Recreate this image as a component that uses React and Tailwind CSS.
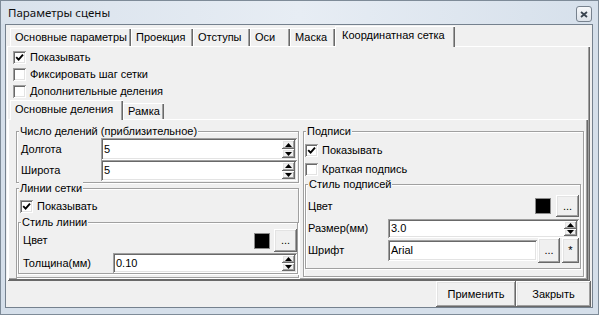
import React from 'react'

const raised =
  'bg-[#f0f0f0] shadow-[inset_-1px_-1px_0_#696969,inset_1px_1px_0_#ffffff,inset_-2px_-2px_0_#a0a0a0,inset_2px_2px_0_#e3e3e3]'
const sunken =
  'bg-white shadow-[inset_1px_1px_0_#a0a0a0,inset_-1px_-1px_0_#ffffff,inset_2px_2px_0_#696969,inset_-2px_-2px_0_#e3e3e3]'
const tabEdge = 'shadow-[inset_1px_1px_0_#ffffff,inset_-1px_0_0_#696969,inset_-2px_0_0_#a0a0a0]'
const panelEdge =
  'shadow-[inset_1px_1px_0_#ffffff,inset_-1px_-1px_0_#696969,inset_-2px_-2px_0_#a0a0a0]'

function Check({ checked }) {
  return (
    <span className={`w-[13px] h-[13px] shrink-0 flex items-center justify-center ${sunken}`}>
      {checked && (
        <svg width="9" height="9" viewBox="0 0 9 9">
          <path d="M1.2 4.2 L3.6 6.6 L8 1.6" fill="none" stroke="#000" strokeWidth="1.9" />
        </svg>
      )}
    </span>
  )
}

function CheckRow({ checked, label, className = '' }) {
  return (
    <div className={`flex items-center gap-[4px] ${className}`}>
      <Check checked={checked} />
      <span>{label}</span>
    </div>
  )
}

function Arrow({ up }) {
  return (
    <svg width="7" height="4" viewBox="0 0 7 4">
      <path d={up ? 'M3.5 0 L7 4 L0 4 Z' : 'M0 0 L7 0 L3.5 4 Z'} fill="#000" />
    </svg>
  )
}

function Spin() {
  return (
    <div className="flex flex-col w-[13px] shrink-0">
      <div className={`flex-1 flex items-center justify-center ${raised}`}>
        <Arrow up />
      </div>
      <div className={`flex-1 flex items-center justify-center ${raised}`}>
        <Arrow />
      </div>
    </div>
  )
}

function Field({ value, spin, className = '' }) {
  return (
    <div className={`flex items-stretch p-[2px] ${sunken} ${className}`}>
      <span className="flex-1 pl-[1px] flex items-center">{value}</span>
      {spin && <Spin />}
    </div>
  )
}

function Btn({ children, className = '' }) {
  return (
    <div className={`flex items-center justify-center ${raised} ${className}`}>{children}</div>
  )
}

function Swatch() {
  return <span className="w-[16px] h-[16px] bg-black border border-[#8a8a8a] shrink-0" />
}

function Group({ title, className = '', children }) {
  return (
    <div
      className={`flex flex-col border border-[#a0a0a0] shadow-[inset_1px_1px_0_#ffffff,1px_1px_0_#ffffff] ${className}`}
    >
      <span className="self-start -mt-[8px] ml-[2px] px-[1px] bg-[#f0f0f0] leading-[14px]">
        {title}
      </span>
      {children}
    </div>
  )
}

const tabs = [
  { label: 'Основные параметры', w: 'w-[121px]' },
  { label: 'Проекция', w: 'w-[62px]' },
  { label: 'Отступы', w: 'w-[57px]' },
  { label: 'Оси', w: 'w-[40px]' },
  { label: 'Маска', w: 'w-[45px]' },
]

export default function App() {
  return (
    <div className="w-[599px] h-[315px] flex flex-col border border-[#7e8b98] bg-[#d5dfea] font-['Liberation_Sans',Arial,sans-serif] text-[11px] text-black whitespace-nowrap overflow-hidden">
      {/* title bar */}
      <div className="h-[23px] shrink-0 flex items-center justify-between pl-[7px] pr-[6px] bg-gradient-to-r from-[#d9e2ec] via-[#e7edf4] to-[#d6e0eb]">
        <span className="font-['Noto_Sans',sans-serif] text-[11.5px] text-[#101010]">Параметры сцены</span>
        <div className="w-[16px] h-[16px] mt-[3px] rounded-[3px] border border-[#77828e] bg-gradient-to-b from-[#f6f8fa] to-[#dde3ea] flex items-center justify-center">
          <svg width="8" height="7" viewBox="0 0 8 7">
            <path d="M1 1 L7 6 M7 1 L1 6" stroke="#3a4450" strokeWidth="1.8" />
          </svg>
        </div>
      </div>

      {/* client */}
      <div className="flex-1 min-h-0 ml-[4px] mr-[5px] mb-[6px] border border-[#75818e] bg-[#f0f0f0] flex flex-col">
        <div className="h-[21px] shrink-0 flex items-end pl-[4px]">
          {tabs.map((t) => (
            <div
              key={t.label}
              className={`h-[18px] pl-[5px] flex items-center overflow-hidden ${t.w} ${tabEdge}`}
            >
              {t.label}
            </div>
          ))}
          <div
            className={`relative z-10 h-[21px] -mb-[1px] w-[120px] pl-[7px] pb-[2px] flex items-center bg-[#f0f0f0] ${tabEdge}`}
          >
            Координатная сетка
          </div>
        </div>

        <div className={`flex-1 min-h-0 ml-[1px] mr-[2px] flex flex-col ${panelEdge}`}>
          <div className="pl-[6px] pt-[3px] flex flex-col">
            <CheckRow checked label="Показывать" className="h-[17px]" />
            <CheckRow label="Фиксировать шаг сетки" className="h-[17px]" />
            <CheckRow label="Дополнительные деления" className="h-[17px]" />
          </div>

          <div className="flex-1 min-h-0 ml-[1px] mr-[2px] mb-[1px] flex flex-col">
            <div className="h-[19px] shrink-0 flex items-end pl-[2px]">
              <div
                className={`relative z-10 h-[20px] -mb-[1px] w-[113px] pl-[5px] pb-[2px] flex items-center bg-[#f0f0f0] ${tabEdge}`}
              >
                Основные деления
              </div>
              <div className={`h-[16px] w-[41px] pl-[5px] flex items-center ${tabEdge}`}>Рамка</div>
            </div>

            <div className={`flex-1 min-h-0 flex gap-[4px] pl-[8px] pt-[5px] pb-[2px] ${panelEdge}`}>
              {/* left column */}
              <div className="w-[283px] flex flex-col">
                <Group title="Число делений (приблизительное)" className="mt-[7px] pb-[1px]">
                  <div className="flex items-center h-[22px] pl-[4px] pr-[1px]">
                    <span className="w-[80px]">Долгота</span>
                    <Field value="5" spin className="flex-1 h-full" />
                  </div>
                  <div className="flex items-center h-[21px] pl-[4px] pr-[1px]">
                    <span className="w-[80px]">Широта</span>
                    <Field value="5" spin className="flex-1 h-full" />
                  </div>
                </Group>

                <Group title="Линии сетки" className="mt-[5px] flex-1">
                  <CheckRow checked label="Показывать" className="mt-[3px] h-[16px] pl-[3px]" />
                  <Group title="Стиль линии" className="mt-[8px] ml-[1px] mb-[1px]">
                    <div className="flex items-center h-[23px] pl-[4px]">
                      <span className="flex-1">Цвет</span>
                      <Swatch />
                      <Btn className="ml-[4px] w-[23px] h-full">...</Btn>
                    </div>
                    <div className="flex items-center mt-[1px] h-[20px] pl-[4px]">
                      <span className="w-[90px]">Толщина(мм)</span>
                      <Field value="0.10" spin className="flex-1 h-full" />
                    </div>
                  </Group>
                </Group>
              </div>

              {/* right column */}
              <div className="w-[281px] flex flex-col">
                <Group title="Подписи" className="mt-[7px] flex-1 mb-[1px]">
                  <CheckRow checked label="Показывать" className="mt-[4px] h-[17px] pl-[1px]" />
                  <CheckRow label="Краткая подпись" className="mt-[2px] h-[17px] pl-[1px]" />
                  <Group title="Стиль подписей" className="mt-[6px] ml-[1px] mr-[2px] pb-[5px]">
                    <div className="flex items-center mt-[4px] h-[22px] pl-[2px] pr-[1px]">
                      <span className="flex-1">Цвет</span>
                      <Swatch />
                      <Btn className="ml-[5px] w-[23px] h-full">...</Btn>
                    </div>
                    <div className="flex items-center mt-[2px] h-[19px] pl-[2px] pr-[1px]">
                      <span className="w-[80px]">Размер(мм)</span>
                      <Field value="3.0" spin className="flex-1 h-full" />
                    </div>
                    <div className="flex items-center h-[25px] pl-[2px] pr-[1px]">
                      <span className="w-[80px]">Шрифт</span>
                      <Field value="Arial" className="flex-1 h-[21px]" />
                      <Btn className="ml-[1px] w-[22px] h-full">...</Btn>
                      <Btn className="ml-[2px] w-[17px] h-full">*</Btn>
                    </div>
                  </Group>
                </Group>
              </div>
            </div>
          </div>
        </div>

        <div className="h-[26px] shrink-0 flex justify-end pr-[1px]">
          <Btn className="w-[80px]">Применить</Btn>
          <Btn className="w-[75px]">Закрыть</Btn>
        </div>
      </div>
    </div>
  )
}
